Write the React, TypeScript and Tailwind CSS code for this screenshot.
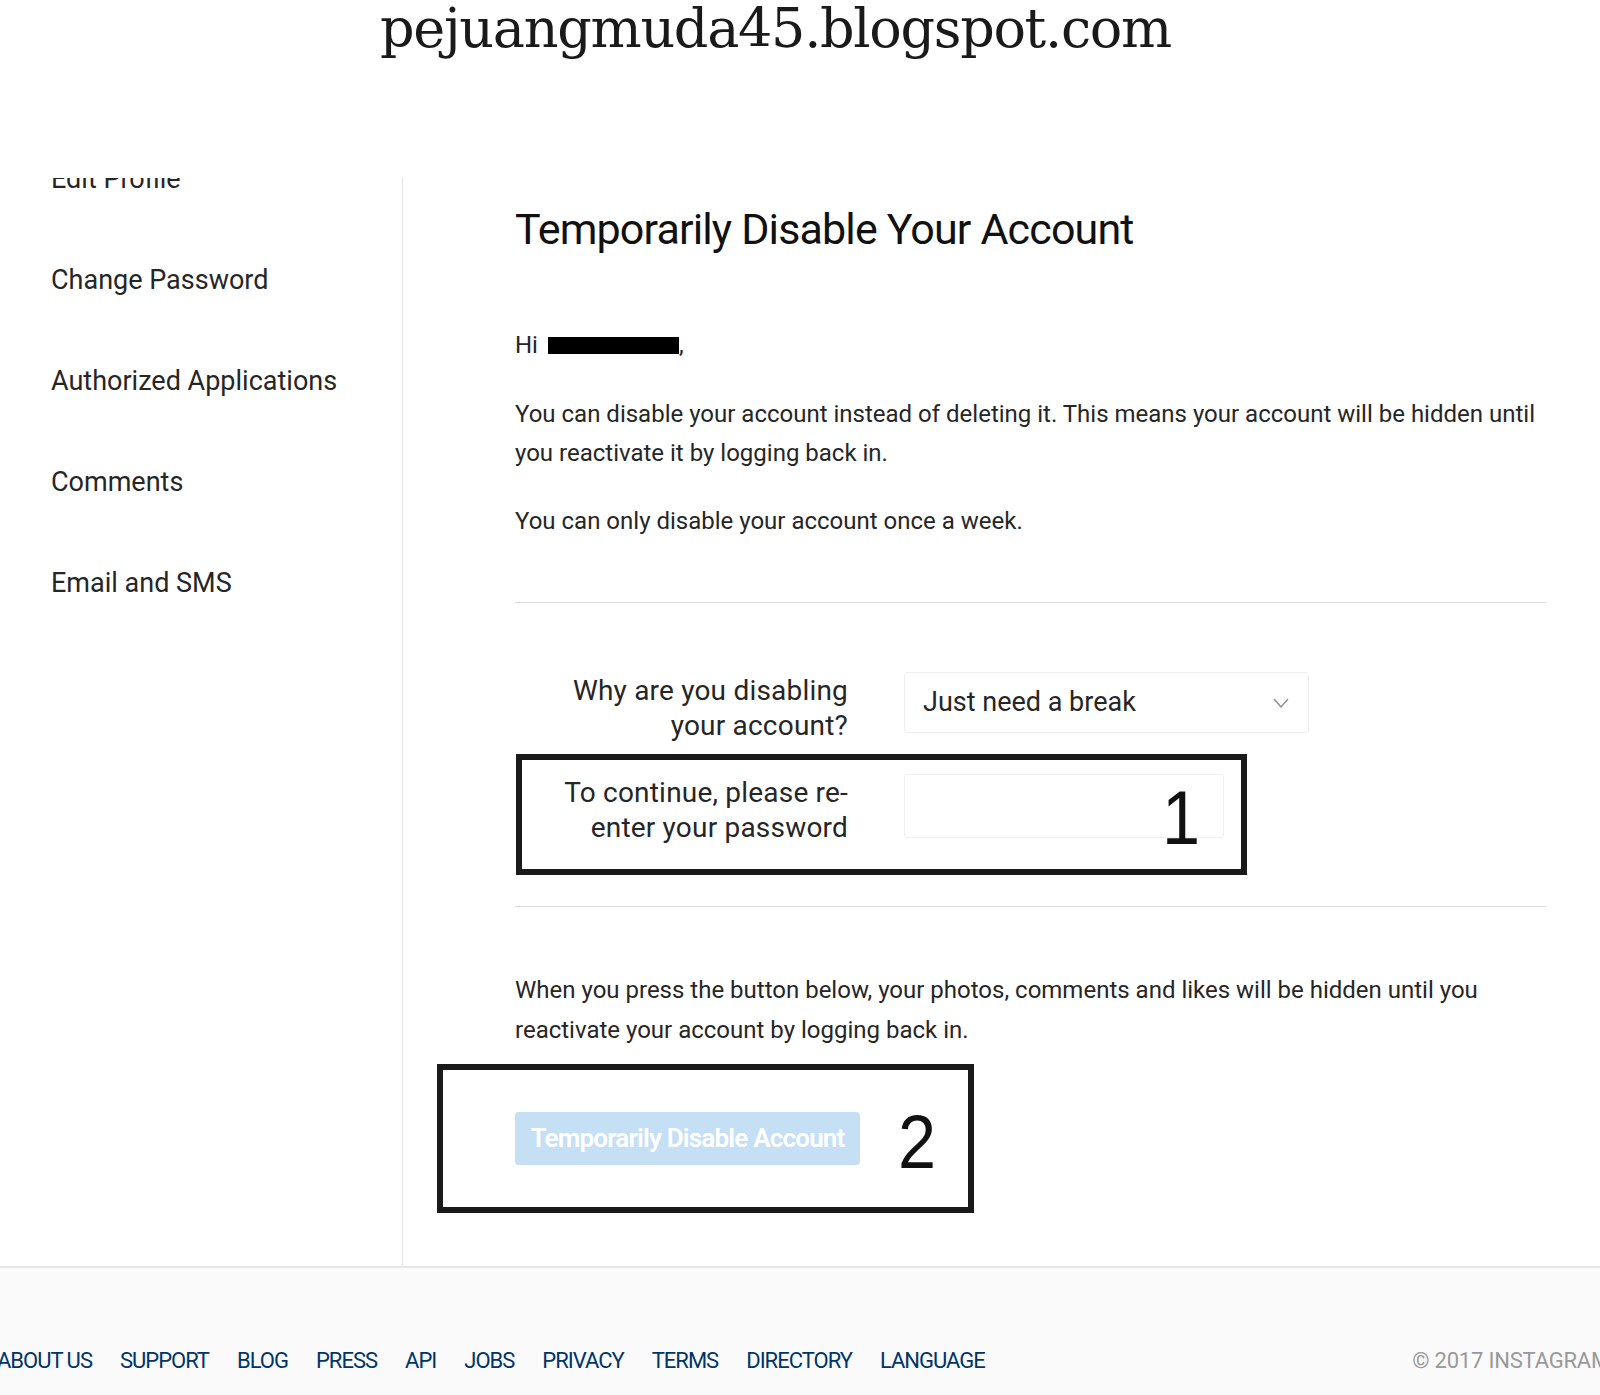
import React from 'react'

const sans = "font-['Roboto','Open_Sans',sans-serif]"

function ChevronDown() {
  return (
    <svg width="18" height="12" viewBox="0 0 18 12" fill="none" className="text-[#8e8e8e]">
      <path d="M2 2l7 8 7-8" stroke="currentColor" strokeWidth="1.4" />
    </svg>
  )
}

export default function App() {
  const navItems = ['Edit Profile', 'Change Password', 'Authorized Applications', 'Comments', 'Email and SMS']
  const footerLinks = ['ABOUT US', 'SUPPORT', 'BLOG', 'PRESS', 'API', 'JOBS', 'PRIVACY', 'TERMS', 'DIRECTORY', 'LANGUAGE']

  return (
    <div className={`w-[1600px] h-[1395px] bg-white overflow-hidden flex flex-col ${sans}`}>
      {/* Blog watermark */}
      <div className="h-[178px] shrink-0 pl-[380px]">
        <div className="font-['DejaVu_Serif',serif] text-[54px] leading-[58px] text-[#1a1a1a] tracking-[-1.3px]">
          pejuangmuda45.blogspot.com
        </div>
      </div>

      {/* Settings area */}
      <div className="flex h-[1088px] shrink-0 overflow-hidden">
        <nav className="w-[403px] shrink-0 border-r border-[#e6e6e6]">
          <ul className="-mt-[15px] pl-[51px] flex flex-col gap-[68px] text-[27px] leading-[33px] text-[#262626]">
            {navItems.map((item) => (
              <li key={item}>{item}</li>
            ))}
          </ul>
        </nav>

        <main className="flex-1 pl-[112px] pr-[54px] text-[#262626]">
          <h1 className="mt-[26px] text-[43px] leading-[50px] text-[#111] tracking-[-0.85px]">
            Temporarily Disable Your Account
          </h1>

          <div className="mt-[72px] text-[24px] leading-[39px]">
            <p className="flex items-center">
              Hi <span className="ml-[10px] inline-block w-[131px] h-[17px] bg-black" />,
            </p>
            <p className="mt-[30px]">
              You can disable your account instead of deleting it. This means your account will be hidden until
              <br />
              you reactivate it by logging back in.
            </p>
            <p className="mt-[29px]">You can only disable your account once a week.</p>
          </div>

          <div className="mt-[61px] h-px bg-[#dbdbdb]" />

          {/* Reason row */}
          <div className="mt-[70px] flex items-start">
            <div className="w-[333px] text-right text-[28px] leading-[35px] tracking-[0.2px]">
              Why are you disabling
              <br />
              your account?
            </div>
            <div className="ml-[56px] -mt-[1px] w-[405px] h-[61px] border border-[#efefef] rounded-[3px] flex items-center justify-between pl-[18px] pr-[18px]">
              <span className="text-[27px]">Just need a break</span>
              <ChevronDown />
            </div>
          </div>

          {/* Password row, annotation 1 */}
          <div className="relative mt-[11px] ml-px w-[731px] h-[121px] border-[6px] border-[#1a1a1a] flex items-start">
            <div className="mt-[15px] w-[326px] text-right text-[28px] leading-[35px] tracking-[0.2px]">
              To continue, please re-
              <br />
              enter your password
            </div>
            <div className="mt-[14px] ml-[56px] w-[320px] h-[64px] border border-[#f0f0f0] rounded-[3px]" />
            <span className="absolute left-[638px] top-[20px] font-['Liberation_Sans',sans-serif] text-[76px] leading-[76px] text-[#111] scale-x-90">
              1
            </span>
          </div>

          <div className="mt-[31px] h-px bg-[#dbdbdb]" />

          <p className="mt-[63px] text-[24px] leading-[40px]">
            When you press the button below, your photos, comments and likes will be hidden until you
            <br />
            reactivate your account by logging back in.
          </p>

          {/* Submit, annotation 2 */}
          <div className="mt-[14px] -ml-[78px] w-[537px] h-[149px] border-[6px] border-[#1a1a1a] flex items-center pl-[72px]">
            <button className="w-[345px] h-[53px] rounded-[4px] bg-[#c5e0f5] text-white text-[26px] font-semibold tracking-[-0.8px]">
              Temporarily Disable Account
            </button>
            <span className="ml-[36px] mt-[6px] font-['Liberation_Sans',sans-serif] text-[76px] leading-[76px] text-[#111] scale-x-90">
              2
            </span>
          </div>
        </main>
      </div>

      {/* Footer */}
      <footer className="flex-1 bg-[#fafafa] border-t-2 border-[#e6e6e6] overflow-hidden">
        <div className="mt-[78px] flex items-center justify-between -ml-[3px] -mr-[10px] text-[22px] leading-[30px] tracking-[-1px]">
          <ul className="flex gap-[28px] text-[#003569]">
            {footerLinks.map((link) => (
              <li key={link}>{link}</li>
            ))}
          </ul>
          <span className="text-[#999] tracking-[-0.2px]">© 2017 INSTAGRAM</span>
        </div>
      </footer>
    </div>
  )
}
